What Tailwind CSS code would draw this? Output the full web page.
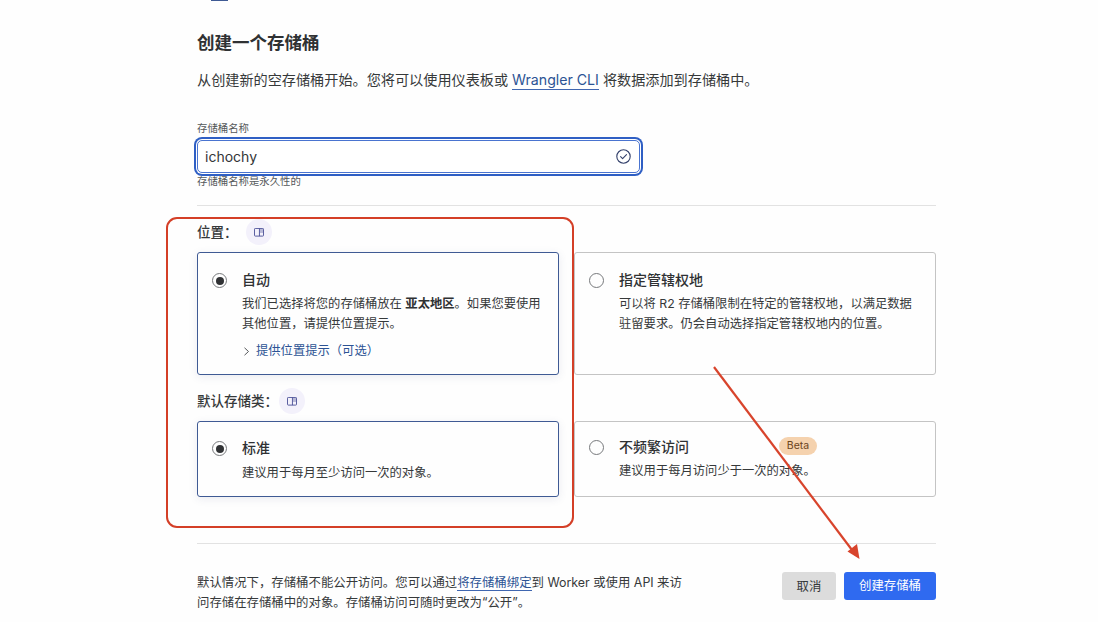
<!DOCTYPE html>
<html lang="zh-CN">
<head>
<meta charset="utf-8">
<title>创建一个存储桶</title>
<script src="https://cdn.jsdelivr.net/npm/@tailwindcss/browser@4"></script>
</head>
<body class="bg-[#fefefe]">
<div class="relative w-[1098px] h-[622px] overflow-hidden pl-[197px] text-[#36393a] font-['Inter','Noto_Sans_CJK_SC',sans-serif]">
  <div class="w-[739px]">
    <div class="ml-[14px] h-[1px] w-[17px] bg-[#3f5a94]"></div>
    <h1 class="mt-[28px] flex h-[28px] items-center text-[17.5px] font-semibold text-[#2f3133]">创建一个存储桶</h1>
    <p class="mt-[13px] flex h-[20px] items-center whitespace-pre text-[14.15px]">从创建新的空存储桶开始。您将可以使用仪表板或 <a class="border-b border-[#3f66b0] leading-[18px] text-[#2c5394]">Wrangler CLI</a> 将数据添加到存储桶中。</p>

    <div class="mt-[32px] flex h-[14px] items-center text-[10.4px] text-[#55585a]">存储桶名称</div>
    <div class="mt-[4px] flex h-[33px] w-[443px] items-center justify-between rounded-[5px] border-[1.5px] border-[#4a74d0] bg-white pl-[7px] pr-[8px] shadow-[0_0_0_1px_#ffffff,0_0_0_3px_#2f5fc4]">
      <span class="text-[14px] text-[#333537]">ichochy</span>
      <svg class="h-[15px] w-[15px]" viewBox="0 0 15 15" fill="none" stroke="#33406b" stroke-width="1.1"><circle cx="7.5" cy="7.5" r="6.7"/><path d="M4.6 7.7l2 2 3.9-4" stroke-linecap="round" stroke-linejoin="round"/></svg>
    </div>
    <div class="mt-[3px] flex h-[12px] items-center text-[10.4px] text-[#55585a]">存储桶名称是永久性的</div>

    <div class="mt-[17px] h-[1px] bg-[#e2e2e2]"></div>

    <div class="mt-[12px] flex h-[28px] items-center text-[13.5px] font-medium">
      <span class="w-[49px]">位置：</span>
      <span class="flex h-[26px] w-[26px] items-center justify-center rounded-full bg-[#f3f1fb]">
        <svg class="h-[9px] w-[10px]" viewBox="0 0 11 10" fill="none" stroke="#4a4f96" stroke-width="1"><rect x="0.5" y="0.5" width="10" height="8.5" rx="0.8"/><path d="M6 0.5v8.5"/><path d="M6.500 1h3.500v4.500H6.500z" fill="#4a4f96" fill-opacity="0.35" stroke="none"/></svg>
      </span>
    </div>
    <div class="mt-[6px] grid grid-cols-2 gap-x-[15px]">
      <div class="flex h-[123px] rounded-[3px] border border-[#3f5a94] pl-[14px] pt-[16px] pr-[12px] shadow-[0_2px_8px_rgba(60,70,120,0.10)]">
        <span class="mt-[4px] flex h-[15px] w-[15px] shrink-0 items-center justify-center rounded-full border border-[#77797c]"><span class="h-[8px] w-[8px] rounded-full bg-[#303234]"></span></span>
        <div class="ml-[15px]">
          <div class="flex h-[20px] items-center text-[14px] font-medium text-[#2f3133]">自动</div>
          <p class="mt-[5px] text-[12.3px] leading-[20px]">我们已选择将您的存储桶放在 <b class="font-semibold text-[#2f3133]">亚太地区</b>。如果您要使用其他位置，请提供位置提示。</p>
          <div class="mt-[7px] flex h-[20px] items-center text-[12.3px] text-[#2c5394]">
            <svg class="mr-[5px] h-[9px] w-[9px]" viewBox="0 0 9 9" fill="none" stroke="#55585a" stroke-width="1"><path d="M2.5 0.8l4 3.7-4 3.7"/></svg>
            提供位置提示（可选）
          </div>
        </div>
      </div>
      <div class="flex h-[123px] rounded-[3px] border border-[#c4c4c4] pl-[14px] pt-[16px] pr-[12px]">
        <span class="mt-[4px] h-[15px] w-[15px] shrink-0 rounded-full border border-[#77797c]"></span>
        <div class="ml-[15px]">
          <div class="flex h-[20px] items-center text-[14px] font-medium text-[#2f3133]">指定管辖权地</div>
          <p class="mt-[5px] text-[12.3px] leading-[20px]">可以将 R2 存储桶限制在特定的管辖权地，以满足数据驻留要求。仍会自动选择指定管辖权地内的位置。</p>
        </div>
      </div>
    </div>

    <div class="mt-[12px] flex h-[28px] items-center text-[13.5px] font-medium">
      <span class="w-[82px]">默认存储类：</span>
      <span class="flex h-[26px] w-[26px] items-center justify-center rounded-full bg-[#f3f1fb]">
        <svg class="h-[9px] w-[10px]" viewBox="0 0 11 10" fill="none" stroke="#4a4f96" stroke-width="1"><rect x="0.5" y="0.5" width="10" height="8.5" rx="0.8"/><path d="M6 0.5v8.5"/><path d="M6.500 1h3.500v4.500H6.500z" fill="#4a4f96" fill-opacity="0.35" stroke="none"/></svg>
      </span>
    </div>
    <div class="mt-[6px] grid grid-cols-2 gap-x-[15px]">
      <div class="flex h-[76px] rounded-[3px] border border-[#3f5a94] pl-[14px] pt-[15px] pr-[12px] shadow-[0_2px_8px_rgba(60,70,120,0.10)]">
        <span class="mt-[4px] flex h-[15px] w-[15px] shrink-0 items-center justify-center rounded-full border border-[#77797c]"><span class="h-[8px] w-[8px] rounded-full bg-[#303234]"></span></span>
        <div class="ml-[15px]">
          <div class="flex h-[20px] items-center text-[14px] font-medium text-[#2f3133]">标准</div>
          <p class="mt-[6px] text-[12.3px] leading-[20px]">建议用于每月至少访问一次的对象。</p>
        </div>
      </div>
      <div class="flex h-[76px] rounded-[3px] border border-[#c4c4c4] pl-[14px] pt-[14px] pr-[12px]">
        <span class="mt-[4px] h-[15px] w-[15px] shrink-0 rounded-full border border-[#77797c]"></span>
        <div class="ml-[15px]">
          <div class="flex h-[20px] items-center text-[14px] font-medium text-[#2f3133]">不频繁访问<span class="ml-[90px] flex h-[18px] w-[38px] items-center justify-center rounded-full bg-[#f5d2ae] text-[10.5px] font-normal text-[#6a431c]">Beta</span></div>
          <p class="mt-[5px] text-[12.3px] leading-[20px]">建议用于每月访问少于一次的对象。</p>
        </div>
      </div>
    </div>

    <div class="mt-[46px] h-[1px] bg-[#e2e2e2]"></div>

    <div class="mt-[28px] flex justify-between">
      <p class="w-[490px] pt-[1px] text-[12.4px] leading-[20px]">默认情况下，存储桶不能公开访问。您可以通过<a class="border-b border-[#3f66b0] text-[#2c5394]">将存储桶绑定</a>到 Worker 或使用 API 来访问存储在存储桶中的对象。存储桶访问可随时更改为“公开”。</p>
      <div class="flex gap-x-[8px]">
        <button class="h-[28px] w-[54px] rounded-[3px] bg-[#dcdcdc] pt-[2px] text-[12.4px] text-[#36393a]">取消</button>
        <button class="h-[28px] w-[92px] rounded-[3px] bg-[#2f6af0] pt-[1px] text-[12.4px] text-white">创建存储桶</button>
      </div>
    </div>
  </div>

  <div class="absolute left-[165.500px] top-[216.500px] h-[311.500px] w-[408.500px] rounded-[11px] border-[2.5px] border-[#d43f27]"></div>
  <svg class="absolute left-[700px] top-[360px]" width="170" height="205" viewBox="0 0 170 205" fill="none">
    <path d="M14 7L152 190" stroke="#d8442c" stroke-width="2.2"/>
    <path d="M159.500 199L147.500 191.500L157 184Z" fill="#d8442c"/>
  </svg>
</div>
</body>
</html>
